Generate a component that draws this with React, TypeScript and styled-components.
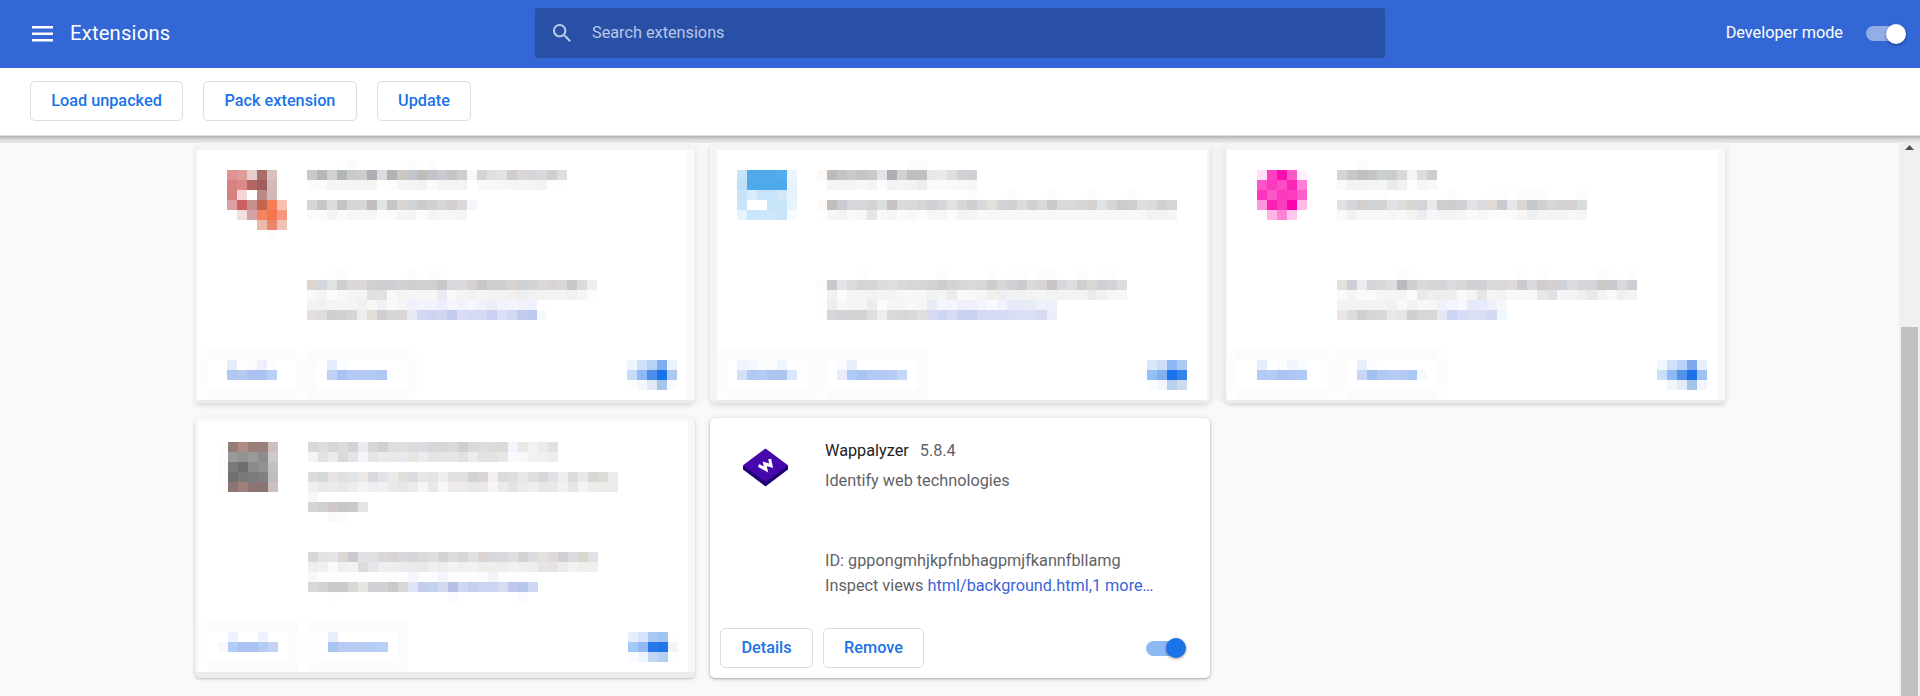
import React from "react";
import styled, { createGlobalStyle } from "styled-components";

const CELL = 10;

const GlobalStyle = createGlobalStyle`
  * { box-sizing: border-box; }
  body {
    margin: 0;
    overflow: hidden;
    background: #f8f9fb;
    font-family: Roboto, "Liberation Sans", sans-serif;
    font-size: 16.25px;
  }
`;

const Page = styled.div`
  width: 1920px;
  height: 696px;
  display: flex;
  flex-direction: column;
  overflow: hidden;
`;

const Header = styled.header`
  height: 68px;
  flex: none;
  background: #3367d6;
  color: #fff;
  display: grid;
  grid-template-columns: 1fr 850px 1fr;
  align-items: center;
`;

const Brand = styled.div`
  display: flex;
  align-items: center;
  gap: 17px;
  padding-left: 32px;
`;

const Title = styled.h1`
  margin: 0;
  padding-bottom: 1px;
  font-size: 20.2px;
  font-weight: 400;
  line-height: 25px;
  letter-spacing: 0.2px;
`;

const SearchBox = styled.div`
  height: 50px;
  margin-bottom: 2px;
  border-radius: 2px;
  background: #2850a7;
  color: #b9c8e6;
  display: flex;
  align-items: center;
  gap: 21px;
  padding-left: 18px;
`;

const Label = styled.span`
  padding-bottom: 2px;
`;

const DevMode = styled.label`
  display: flex;
  align-items: center;
  justify-content: flex-end;
  gap: 23px;
  padding: 0 14px 1px 0;
`;

const Track = styled.span<{ $color: string }>`
  width: 32px;
  height: 15px;
  margin: 2.5px 8px 2.5px 0;
  display: flex;
  align-items: center;
  justify-content: flex-end;
  background: ${(p) => p.$color};
  border-radius: 8px;
`;

const Knob = styled.span<{ $color: string }>`
  width: 20px;
  height: 20px;
  flex: none;
  margin-right: -8px;
  border-radius: 50%;
  background: ${(p) => p.$color};
  box-shadow: 0 1px 3px rgba(0, 0, 0, 0.4);
`;

const Toolbar = styled.div`
  height: 67px;
  flex: none;
  background: #fff;
  display: flex;
  align-items: flex-start;
  gap: 20px;
  padding: 13px 30px 0;
`;

const Button = styled.button<{ $width: number }>`
  width: ${(p) => p.$width}px;
  height: 40px;
  padding: 0 0 2px;
  border: 1px solid #dadce0;
  border-radius: 5px;
  background: #fff;
  color: #1a73e8;
  font: 500 16.25px Roboto, "Liberation Sans", sans-serif;
`;

const Viewport = styled.div`
  flex: 1;
  min-height: 0;
  display: flex;
  flex-direction: column;
`;

const ShadowEdge = styled.div`
  height: 8px;
  flex: none;
  background: linear-gradient(#dddfde 0 1px, #b0b1b1 1px, #c6c8c7 3px, #dcdedd 5px, #e8eae9 8px);
`;

const Scroller = styled.div`
  flex: 1;
  display: flex;
  min-height: 0;
  overflow: hidden;
`;

const CardGrid = styled.main`
  flex: 1;
  padding-left: 195px;
  display: grid;
  grid-template-columns: repeat(3, 500px);
  grid-template-rows: 260px 260px;
  gap: 15px;
`;

const ScrollBar = styled.div`
  width: 21px;
  flex: none;
  background: #f0f0f0;
  display: flex;
  flex-direction: column;
  align-items: center;
  padding-top: 2px;
`;

const Thumb = styled.div`
  width: 17px;
  flex: 1;
  margin-top: 177px;
  background: #c1c1c1;
`;

const Card = styled.article`
  display: flex;
  flex-direction: column;
  border-radius: 5px;
  background: #fff;
  box-shadow: 0 1px 2px rgba(60, 64, 67, 0.3), 0 1px 4px 1px rgba(60, 64, 67, 0.15);
`;

const MaskedCard = styled.article<{ $x: number; $y: number; $edge: string; $shadow: string }>`
  padding: ${(p) => p.$y}px 0 0 ${(p) => p.$x}px;
  border-radius: 5px;
  background: ${(p) => p.$edge};
  box-shadow: ${(p) => p.$shadow};
`;

const Panel = styled.div`
  width: 490px;
  height: 250px;
  background: #fff;
  display: flex;
  flex-direction: column;
`;

const MaskedBody = styled.div<{ $iconCol: number; $textCol: number }>`
  height: 200px;
  display: grid;
  grid-template-columns: ${(p) => p.$textCol * CELL}px 1fr;
  padding-top: 10px;

  > :first-child {
    padding: 10px 0 0 ${(p) => p.$iconCol * CELL}px;
  }
`;

const MaskedText = styled.div`
  height: 170px;
  display: flex;
  flex-direction: column;
  justify-content: space-between;
`;

const MaskedFooter = styled.div`
  height: 50px;
  display: flex;
  justify-content: space-between;
`;

const MaskedToggle = styled.div`
  width: 70px;
  padding-top: 10px;
`;

const MosaicRow = styled.div`
  display: flex;
  height: ${CELL}px;
`;

const Cell = styled.i`
  width: ${CELL}px;
  height: ${CELL}px;
  flex: none;
`;

const Details = styled.div`
  flex: 1;
  display: grid;
  grid-template-columns: 82px 1fr;
  padding: 18px 0 0 33px;
`;

const LogoSlot = styled.div`
  padding-top: 12px;
`;

const Info = styled.div`
  height: 162px;
  display: flex;
  flex-direction: column;
  justify-content: space-between;
  color: #5f6368;
`;

const InfoBlock = styled.div<{ $line: number }>`
  line-height: ${(p) => p.$line}px;
  white-space: nowrap;
`;

const Name = styled.span`
  color: #202124;
  margin-right: 11px;
`;

const Link = styled.a`
  color: #3b64d8;
`;

const Actions = styled.div`
  height: 50px;
  flex: none;
  display: flex;
  gap: 10px;
  padding-left: 10px;
`;

const ToggleSlot = styled.div`
  margin: 10px 24px 0 auto;
`;

// Each row lists hex cells; "_" leaves a cell empty and "*n" repeats it.
const parseRow = (row: string): string[] =>
  row
    .split(" ")
    .filter(Boolean)
    .flatMap((token) => {
      const [color, times] = token.split("*");
      return Array<string>(Number(times ?? 1)).fill(color);
    });

const Mosaic = ({ rows }: { rows: string[] }) => (
  <div>
    {rows.map((row, y) => (
      <MosaicRow key={y}>
        {parseRow(row).map((color, x) => (
          <Cell key={x} style={{ background: color === "_" ? undefined : `#${color}` }} />
        ))}
      </MosaicRow>
    ))}
  </div>
);

interface Masked {
  x: number;
  y: number;
  edge: string;
  shadow: string;
  iconCol: number;
  textCol: number;
  icon: string[];
  summary: string[];
  meta: string[];
  buttons: string[];
  toggle: string[];
}

const softShadow = "0 3px 4px rgba(60, 64, 67, 0.15)";

const maskedCards: Masked[] = [
  {
    x: 2,
    y: 7,
    edge: "linear-gradient(#f4f4f4 7px, #f8f9f9 7px 257px, #ebecec 257px)",
    shadow: `inset 2px 0 0 #f2f3f4, ${softShadow}, 2px 0 0 #f6f7f8, 12px 0 0 #f6f7f9`,
    iconCol: 3,
    textCol: 11,
    icon: [
      "de9494 e09b9b e4cfcf a76e6c d9c1c0",
      "d98080 dd8989 b36563 9f5d5b d6b9b8",
      "d87f7f f3d5d6 ffffff b88a88 d4b8b7",
      "e09fa2 cc5f60 c7908e c5654e f47c57 f9c0af",
      "_ f3dfdf d1a3a2 f18360 f47550 f7977c",
      "_*3 ecb9ab ea876a f0c2b6",
      "_*4 fcfcfc",
    ],
    summary: [
      "_*3 fdfdfc fbfbfb _*5 fbfbfb _ fcfcfc",
      "c9c9c5 b5b8b8 d2d1cf b1b6b6 c8cacb cccdcb aeadb2 d9dddf b0b3b3 cec8c4 c2c4ce bdbdba c2c2c8 c9cad0 c4c5c2 cdcfce f8f8fa d7d3d3 dfe0e2 e2e3e3 cecdd0 ddd6d6 d4d6da d9d9db cfcfcf dedede",
      "fbfbfa fafcfb f2f5f4 f5f5f5 f4f4f4*3 fefdfa fafdfc f4f6f5 f4f4f4 f0f3f1 f9faf9 f4f4f4*2 f3f3f3 _ f9f9f7 f7f7f7*2 f6f6f6 f5f5f4 f4f4f4 f2f2f2 fdfdfd fcfdfc",
      "_",
      "d6d4d5 c8c6c7 dedcdd c4c4c6 d5d6d8 d8d7d5 c2bebf e2e3e4 c4c5c7 dad5d1 d1d3d7 cdcbcc d1d0d2 d7d7d9 d3cfce d8d9d8 f6f7fb",
      "fafafa fbfbfb f4f4f4 fafafa f6f6f6*3 fefdfb fbfbfb f5f5f3 f5f5f5 fbfdfc f5f5f5 f6f6f6 f6f6f4 f4f4f4",
    ],
    meta: [
      "_*2 fdfdfd fcfcfc _*6 fcfcfc _ fcfcfc fdfdfd",
      "ddd6d0 d5d7de e1e3e2 cfcfd0 d9d9d9 dcd7d7 d1cfd1 cfcdcf cfced2 d3d1d2 cfcdce d3d1d0 d1cfcf cac7ca d7d9dc dbd9da d5d1d2 c8c6c9 cfced1 cfcfd2 d8d3d0 d0cfd2 d2d3d5 d9d9d9 d8d4d5 d8d8d8 c8c8c9 dbdbdb eeeeee",
      "fbf9f7 f4f4f4 fafdfc f8f8f8 f4f4f4*2 e1e0e2 e2e1e3 f8f8f8 f3f3f3 f5f5f5 f6f6f6 f8f6f5 e9ebf0 f8f8f8 f3f3f3 f2f2f2 f5f5f5 f3f3f3*2 f4f1ed ebedef f1f1f1 f2f2f2 f4f4f4 f3f3f3 eff1f2 f7f4f3 fafdfb",
      "f2f2f2 f1f1f1 f4f4f4*3 f0f0f0 f9f7f4 f0f1f3 f9f9f9 f5f5f5 eff2fc f2f4fd*2 ecedfa f4f6fe f2f1fc f6f7fd f0f2fc ecedf9 f2f4fd f3f5fe f0f3fc eff2fd",
      "e2dfde dddddd d0ced0 d2d0d1 d6d6d6 ebedee e2dfda cfcfd0 d7d6d6 d9d6d6 e7e9f6 d3d8f2 cdd4f2 d0d6f1 c2caef d9dcf3 d6daf4*2 cdd0f0 dbe0f6 d2d9f3 c3ccee bdc9ee f5faff",
      "_",
    ],
    buttons: [
      "fdfdfd fbfbfb*9 _ fbfbfb*10 fdfdfd",
      "fcfcfc _*2 e5edfc _ fafcff efeffb fcfefe _*2 fbfbfb*2 _ e5edfc fbfdff _*6 fbfbfb",
      "fcfcfc _*2 b1c8f3 b6c9f3 abc1f1 aac3f1 bbcff5 _*2 fcfcfc*2 _ c1d1f5 a6c3f4 b4caf4 b4c9f3*2 adc6f3 fbfdff _ fcfcfc",
      "fcfcfc _*9 fafdfb fcfcfc _*9 fcfcfc",
      "fefefe fbfbfb*9 fdfdfd fbfbfb*10 fefefe",
    ],
    toggle: [
      "_ edf4fd cfe1f9 b8d1f6 7eadf0 ebf2fe",
      "_ c7dcf8 8eb9f4 4c8ee9 1a73e8 adc9f1",
      "_ fcfefe f4f8fd e1e9f6 a7c4ec f9fafd",
    ],
  },
  {
    x: 7,
    y: 7,
    edge: "linear-gradient(#f4f4f4 7px, #f3f5f4 7px 257px, #ebecec 257px)",
    shadow: `${softShadow}, -3px 0 0 #f4f6f5, 7px 0 0 #f3f5f4`,
    iconCol: 2,
    textCol: 10,
    icon: [
      "c6e3f8 4fa9ea*3 53adee e9f6fe",
      "bfdff7 4da8ec*4 e5f3fd",
      "c6e3f8 d7edfb c8e4fa*2 d1e8fb e6f3fe",
      "c8e4f8 ffffff*2 c9e5fa*2 e6f4fe",
      "e5f4fc cae5fa cde6fc cfe7fc c8e4f9 f7fbff",
    ],
    summary: [
      "_*9 fcfcfc*2",
      "fef8f4 bcbcbc c4c4c5 c9caca c4c6c5 c9caca e3e4e9 adaeb2 d1d1cf c0bebf*2 e6e8e9 eaeae8 dfdfde d1d2d7 d0cfd1",
      "_ f5f5f5 f3f3f3*2 f7f7f7 f4f4f4 fcfcfd f0f3f2 f4f4f4 f2f2f2 eeebe9 f8fafb f9f9f9*2 f7f7f7 f6f6f6",
      "_*15 fcfcfc _*3 fcfcfc _*3 fcfcfc _*3 fcfcfc _*3 fcfcfc",
      "fef9f5 c0bfc0 cbccd3 d6d7da d9d6d7 d5d2d4 dcdee2 c6c2c3 dbd9da*2 d6d4d5 d0d0d3 d6d7dc e5e1e0 d5d7d8 cecfd1 d7d9dc e3dfdb d4d4d7 d0d0d2 dddcdd d1d1d4 dad8d9 cacacd dad8da*2 d5d5d8 d5d2d0 dfe2e6 d6d7d5 cccacc cfcfd1 dedfdf dbdbda d1cfd2 d5d5d7",
      "fefefe f6f6f6 f3f3f3 f9fbfa f6f6f6 e6e6e6 f9f9f9 f5f5f5 fbfbfb f8f8f8 fcfcfc f6f6f6 f5f6f8 fcfcfc f4f4f4 f2f5f4 f8f8f8*17 f3f3f3*2 f5f5f5",
    ],
    meta: [
      "_*4 fdfdfd _*7 fcfcfc _*4 fcfcfc _ fdfdfd*2 _ fcfcfc*2 _*2 fcfcfc _ fdfdfd*2",
      "fefaf7 c9cacd e5e5e7 dbdadc d3d5d4 d6d5d3 dadbdc dedfdf dad8d9 d9d7d6 d7d5d6 d3d3d6 d0cbce d3d3d6 d6d6d9 dad9dc d6d8d8 cfcdcf d6d7d9 d1cfd1 cacad1 d9dbdb d7d5d8 cac4c5 d6d8dd dddfde d0ced1 d7d7d5 d0d1d4 d4d4d6 dddddf",
      "fefefe f1f1f1 fbfbfb f4f4f4*2 f2f2f2 f4f4f4 f3f3f3 f7f7f7*3 f2f2f2 f3f3f3 edeaeb f8f8f8*2 f6f6f6 f2efed eeedf1 f3f3f3 f1f1f1 f3f3f3 f5f5f5 f3f3f3*4 ebebeb f2f2f2 f7f7f7*2",
      "fefdfc ecedee f7f7f7 f5f5f5*2 ececec f9fbfd f5f5f5*2 f8f8f8 f6f6f6 e7ebf8 f3f6fd f3f5fd eef0fc*2 f2f5fe f9fbfe f1f4fd e8eaf8 e7eaf8 e8ebf8 eff2fb ecf0fc",
      "fefdfc d8d7d8 d3d3d8 d3d2d3 d3d2d0 dddee0 eeeeee dad8da d7d7d9 dad8da dfdee0 d7dbf2 cdd7f3 d8dcf3 cad2f0 c8d1f0 d6d9f5 d6d9f4*2 d9def4 dadff4*2 d6dbf2 ebeffb",
      "_",
    ],
    buttons: [
      "fafdfc fbfbfb*8 fbfdfb*2 fbfbfb*10",
      "fcfcfc _ eff4fd f4f8fe fbfcfd fcfcfc edf4fe _*2 fcfcfc*2 _ fafcff e7f0fb _*6 fcfcfc",
      "fcfcfc _ d3dff8 b2c7f2 b5caf5 b0c4f1*2 dae6fc _ fcfcfc*2 _ e9ecfa b0cbf4 a6c5f2 b2caf5*2 b7cbf5 c4d9f7 _ fcfcfc",
      "fcfcfc _*8 fcfcfc*2 _*9 fcfcfc",
      "fcfdfc fbfbfb*8 fcfcfc fdfdfd fbfbfb*10",
    ],
    toggle: [
      "_ d9e7fb ccdef9 8bb7f2 abcaf3",
      "fbfdff 94bff6 82b0ee 1a73e8 3683e8 fcfdfd",
      "_ fafcff f2f6fd b9d0f0 cddbf0",
    ],
  },
  {
    x: 2,
    y: 7,
    edge: "linear-gradient(#f4f4f4 7px, #f9f9f9 7px 257px, #ebecec 257px)",
    shadow: `inset 2px 0 0 #f0f2f4, ${softShadow}, 2px 0 0 #f6f7f7, -8px 0 0 #f0f2f4, 3px 0 4px rgba(60, 64, 67, 0.06)`,
    iconCol: 3,
    textCol: 11,
    icon: [
      "fde0f3 fb40c2 f90fb0 fc58c8 fff2fa",
      "fc53c6 fb3abf fb4ac3 fa27b5 fd80d4",
      "fb35be fc55c6 fb37be fb3bc0 fc5fca",
      "fe97dc f922b5 fb3dbf f905ab febbe8",
      "_ feb5e5 fd84d5 fec8ee",
    ],
    summary: [
      "_*2 fcfcfc",
      "d5d5d6 c8c8c7 c0bfc4 c5c3c4 cacfd0 cacdce d7d8d8 f4f4f4 dbdddf cecccd",
      "fafafa f3f3f3 f2f2f2 f4f4f4*2 e9eaed f1f1f1 fdfdfb f5f5f5 f8f8f8",
      "_*3 fdfdfd*2 _*6 fcfcfc _*3 fdfdfd*2 _ fcfcfc*3 _*3 fcfcfc",
      "e2e0e2 d4d6d9 d4cfcc d0d3d5 d5d2d4 e1e2e5 dddedc d7d6d5 d2d4d8 e8e9e9 cecece cdcdce d0d1d6 e3e3e3 dbdadf e0dad5 cacbd0 e4e7ea ddd7d1 c4c8cf d0d0d1 d8d6d8 d4d3d1 d5d1d3 d9dbdf",
      "f9f9f9 f1f1f1 f7f7f7*2 fbf8f4 f3f5f7 f9f9f9 f4f2f0 ebedf0 f7f7fb f4f4f4 f3f3f3 f5f7f6 fafafa f7f7f7 fbfbfb*2 fafafa f8f5f2 edeff0 f4f4f4*3 f8f8f8 f5f5f5",
    ],
    meta: [
      "_*6 fcfcfc fdfdfd _*10 fdfdfd _ fdfdfd _*5 fcfcfc fdfdfd _ fcfcfc",
      "e4e1dc cfd0d7 edebed d6d4d8 d9d9d9 dfdddf bab9bd cfcfcd dbd9dc d7d5d7 d5d5d8 d9dbdf d6d7d8 d3d0d2 d2d0d5 dadad9 d8d9d8 dedada cccacf d7d9dd d2cdcd d6d0d1 cfd1d9 dddcdf d7d5d9*2 cccac9 cbc9cd d9d8da cecdd3",
      "fafafa f4f6f5 fafafa*2 f4f5f5 f3f6f5 f4f4f4 f9fafb ebe8e7 eceef1 eeeeee*2 f9f9f9 f6f5f2 e5e5e5 f6f6f6 f3f3f3 f8f8f8*2 f7f7f7 e8e7e5 e2e2e2 f4f5f8 f5f5f5 efefef eae8e9 f3f3f3 f9f9f7 f0f0f0 f3f3f6",
      "f3f3f3*5 f0f0f0 f8f8f8 f2f2f2 f8f8f8 f6f6f6 eff2fb f2f5fd f7f9fe e6e9f8 e8ecfa f0f0fb f3f9fd",
      "ebe6e4 dbdcdd d0ced1 d6d5d4 d9d8d9 e7e8ea e6e4e6 d0cfcd d7d5d6 d8d6d6 e4e8f5 cbd4f1 d7dcf7 dadff4*2 d4d8f3 eef6fe",
      "_",
    ],
    buttons: [
      "fdfdfd fbfbfb*9 fdfdfd fbfbfb*10 fefefe",
      "fcfcfc _*2 e5edfd _ fafcff f1f3fd f8fcff _*2 fcfcfc*2 _ e7effd f9fdff _*6 fcfcfc",
      "fcfcfc _*2 b0cbf6 b5cbf4 aec2f1 aec6f4 b0caf7 _*2 fcfcfc*2 _ c7d6f6 a1bff1 aecaf3 b5cbf4*2 abc7f3 f5f9fe _ fcfcfc",
      "fafdfb _*9 fafdfb fcfcfc _*9 fcfcfc",
      "fefefe fbfbfb*9 fdfdfd fefefe fbfbfb*9 fefefe",
    ],
    toggle: [
      "_ f1f6fd cfe1fa bad3f8 7cabf0 e7effc",
      "_ cbdff8 8cb8f4 5193e9 1a73e8 a1c2f0",
      "_*2 f1f6fb e2ebf6 a4c4ea f2f6fc",
    ],
  },
  {
    x: 3,
    y: 4,
    edge: "linear-gradient(#f7f9f8 4px, #f5f6f6 4px 254px, #ebedec 254px)",
    shadow: "0 1px 2px rgba(60, 64, 67, 0.24), 0 1px 4px 1px rgba(60, 64, 67, 0.08)",
    iconCol: 2,
    textCol: 11,
    icon: [
      "fdfdfd 957c77 b08c86 9a807a*2 cdbfbf",
      "fcfcfc 9a9796 929292 999999 8d8d8d cecaca",
      "fcfcfc 7a7a78 6e6e6e 8b8b8b 929292 c4c0c0",
      "fcfcfc 70706e 7a7a7a 7b7b7b 808080 c1bcbc",
      "fdfdfd 8b7471 9f8079 8b7471*2 ccc0be",
    ],
    summary: [
      "_",
      "dad8da dcdddd d8d6d8 dcdddb d3d3d6 e7eaef d7d7d6 d0d0d0 dfdddf dedfe0 dbdadd d9dbe0 dad8d7 d6d8d8 dad8db ccd0cf dadad9 dbdedd dbdbda dadad8 f1f5fc e8e8e8 f4f2f0 ebebeb e2e2e5",
      "f4f4f4 e2e2df ebebeb d9d9d5 e4e4e7 f3f5fa e5e5e5 ebe9ea e9e7ea e7e9ed e8e4e2 e9ebee e4e4e4 e6e6e6*2 e0e1e0 ececec e1e2e2*2 e8e7e4 f9faff f7f7f7 f1f1f1 f0f0f0 ecebee",
      "_",
      "dbdddd d4d8d6 e6e4e6 e1dfe0 e2e5e7 ebe8e5 dad8db e3e4ea e9e9e9 e0dfdc dcdcde e7e7e7 e4e4e4 efefef e3e0e1 e2e0e2 d3d3d6 d7d5d6 f4eeed dbdbde dfdfe1 e8e8e8 dfdfde dad8d6 e0e1e6 eeeeec dddcde e8e8e8 d7d7d7 dddcd9 ececee",
      "f0efed e7eaea ececea e8e8e8 ededed f6f4f0 efedef f0f1f5 e9e9e9 e8e6e7 eceaea f5f5f5 e8e8e8 f8f8f8 efebec ebebeb e7e6e9 ede8e7 f3f5f9 ebebeb e3e3e3 ebebeb eeeeee e9e6e8 e8e7ea f1f1f1 e7e5e7 f4f4f4 ededec ecebe8 ebebed",
      "f7f7f7",
      "d5d4d8 d0d0ce cfc8c9 c9c6ca cacacd e4e4e4",
      "_*2 fafafa fcfcfc",
    ],
    meta: [
      "_",
      "d8d6d8 e3e3e3 e4e3e5 dbd7d3 cacad0 e0e1e4 e0e0e2 d9d8db dad3d4 d7d8df d5d5da d9dbda dededf d4d3d5 dcdcde d7d7da e0e0e2 dbd4d3 d7d8de d9d8dc dedede d3d3d6 dddddf e3e0de dfdad9 cfd1d7 dbdbdf d7d6cf e0e0e7",
      "efefef f0f0f0 fafafa f0efed f2f2f2 dcdcdf e5e6ea eeeeee f1eeef ebebed eaeaea e8e8e8 efefef ededed f4f3f0 f0f0f2 f3f3f3 f0eeeb eeeeee ededef f1f1f1 efefef ededed e7e4e4 e6e3e3 ececec f2f2f2 f1efec efefef",
      "f8f8f8 fdfdfd*9 f5f6fd fdfdff*2 f4f6fd fdfdff*4 f3f3fc fdfdff*4",
      "d9d8d9 d3d3d1 cbc9ca cbcbce d8d8d7 e6e6e3 d2d0d4 d1d1d2 cbc9ca d8d7d7 dfe3f6 c5cced c4d1ef d4d9f2 b5bfea cfd8f2 c5cfee ccd6f2 ccd4f2 d9dbf2 bdc8ec b6c6ec cdd8f3",
      "_*2 fdfdfd _*11 f9fbff _*6 f9fbff",
    ],
    buttons: [
      "fcfefc fafdfb*8 fcfcfc _ fcfcfc fafdfb*8 fcfcfc",
      "fdfdfd _*2 ecf3fd _*2 edf2fd _*2 fcfcfc fdfdfd*2 _ e8effc _*6 fcfcfc",
      "fdfdfd _ faf8fd b1cdf7 abc1f1*2 b4ccf5 c4d2f3 _ fcfcfc fdfdfd*2 _ abc5f3 b6caf2*3 b4cdf6 b8cff6 _ fcfcfc",
      "fdfdfd _*8 fcfcfc fdfdfd*2 _*8 fcfcfc",
      "_ fafdfb*8 fcfcfc _ fcfcfc fafdfb*8 fcfcfc",
    ],
    toggle: [
      "_ e5effc d5e5fc a9c8f4 a1c3f4 fdfdfd",
      "_ a4c8f8 92b9f1 2677e8 2075e8 f1f5fa",
      "_ f9fbff edf4fd c2d5f1 b3cfee fdfdfd",
    ],
  },
];

const MaskedExtension = ({ card }: { card: Masked }) => (
  <MaskedCard $x={card.x} $y={card.y} $edge={card.edge} $shadow={card.shadow}>
    <Panel>
      <MaskedBody $iconCol={card.iconCol} $textCol={card.textCol}>
        <Mosaic rows={card.icon} />
        <MaskedText>
          <Mosaic rows={card.summary} />
          <Mosaic rows={card.meta} />
        </MaskedText>
      </MaskedBody>
      <MaskedFooter>
        <Mosaic rows={card.buttons} />
        <MaskedToggle>
          <Mosaic rows={card.toggle} />
        </MaskedToggle>
      </MaskedFooter>
    </Panel>
  </MaskedCard>
);

const MenuIcon = () => (
  <svg width="21" height="16" viewBox="0 0 21 16" fill="#fff">
    <path d="M0 0h21v2.5H0zM0 6.5h21V9H0zM0 13h21v2.5H0z" />
  </svg>
);

const SearchIcon = () => (
  <svg width="18" height="18" viewBox="3 3 17.5 17.5" fill="#b9c8e6">
    <path d="M15.5 14h-.79l-.28-.27C15.41 12.59 16 11.11 16 9.5 16 5.91 13.09 3 9.5 3S3 5.91 3 9.5 5.91 16 9.5 16c1.61 0 3.09-.59 4.23-1.57l.27.28v.79l5 4.99L20.49 19l-4.99-5zm-6 0C7.01 14 5 11.99 5 9.5S7.01 5 9.5 5 14 7.01 14 9.5 11.99 14 9.5 14z" />
  </svg>
);

const WappalyzerLogo = () => (
  <svg width="46" height="39" viewBox="0 0 46 39">
    <path d="M0 17.5v4L22.5 38.5 45 21.5v-4z" fill="#1f0071" />
    <path d="M22.5 0.5L45 17.2 22.5 34 0 17.2z" fill="#4608ad" />
    <path d="M15.6 17.4l7.4 4.2-1.3-5.8 6.4 2-1.4-6.8" fill="none" stroke="#fff" strokeWidth="3" />
  </svg>
);

const Toggle = ({ track, knob }: { track: string; knob: string }) => (
  <Track $color={track}>
    <Knob $color={knob} />
  </Track>
);

export default function App() {
  return (
    <Page>
      <GlobalStyle />
      <Header>
        <Brand>
          <MenuIcon />
          <Title>Extensions</Title>
        </Brand>
        <SearchBox>
          <SearchIcon />
          <Label>Search extensions</Label>
        </SearchBox>
        <DevMode>
          <Label>Developer mode</Label>
          <Toggle track="#93ade8" knob="#fff" />
        </DevMode>
      </Header>
      <Toolbar>
        <Button $width={153}>Load unpacked</Button>
        <Button $width={154}>Pack extension</Button>
        <Button $width={94}>Update</Button>
      </Toolbar>
      <Viewport>
        <ShadowEdge />
        <Scroller>
          <CardGrid>
            {maskedCards.map((card, i) => (
              <MaskedExtension key={i} card={card} />
            ))}
            <Card>
              <Details>
                <LogoSlot>
                  <WappalyzerLogo />
                </LogoSlot>
                <Info>
                  <InfoBlock $line={30}>
                    <Name>Wappalyzer</Name>5.8.4
                    <br />
                    Identify web technologies
                  </InfoBlock>
                  <InfoBlock $line={25}>
                    ID: gppongmhjkpfnbhagpmjfkannfbllamg
                    <br />
                    Inspect views <Link>html/background.html,1 more…</Link>
                  </InfoBlock>
                </Info>
              </Details>
              <Actions>
                <Button $width={93}>Details</Button>
                <Button $width={101}>Remove</Button>
                <ToggleSlot>
                  <Toggle track="#8cb8f3" knob="#1a73e8" />
                </ToggleSlot>
              </Actions>
            </Card>
          </CardGrid>
          <ScrollBar>
            <svg width="9" height="5" viewBox="0 0 9 5">
              <path d="M4.5 0L9 5H0z" fill="#505050" />
            </svg>
            <Thumb />
          </ScrollBar>
        </Scroller>
      </Viewport>
    </Page>
  );
}
